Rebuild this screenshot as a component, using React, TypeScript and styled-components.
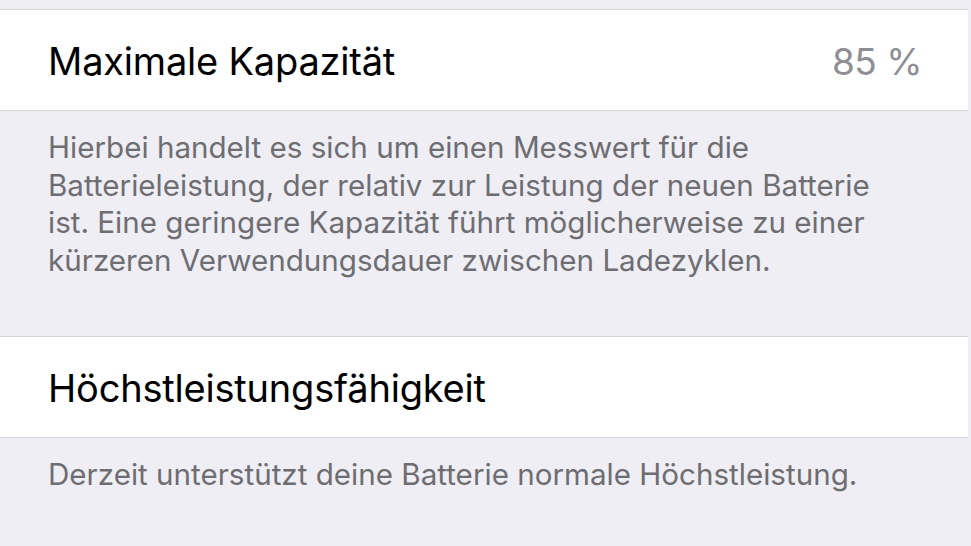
import React from "react";
import styled, { createGlobalStyle } from "styled-components";

const Global = createGlobalStyle`
  html, body { margin: 0; padding: 0; background: #efeef4; }
  body { font-family: Inter, "Noto Sans", sans-serif; -webkit-font-smoothing: antialiased; }
`;

const Page = styled.div`
  width: 971px;
  height: 546px;
  overflow: hidden;
  background: #efeef4;
  display: flex;
  flex-direction: column;
  padding-top: 9px;
  box-sizing: border-box;
`;

const Cell = styled.div`
  flex-shrink: 0;
  height: 100px;
  background: #fff;
  border-top: 1px solid #d6d5da;
  border-bottom: 1px solid #d6d5da;
  display: flex;
  align-items: center;
  justify-content: space-between;
  padding: 0 46px 0 48px;
  margin-right: 3px;
  box-sizing: content-box;
`;

const Label = styled.span`
  font-size: 38px;
  color: #000;
  letter-spacing: -0.2px;
  margin-top: 2px;
`;

const Value = styled.span`
  font-size: 37px;
  color: #8e8e93;
  letter-spacing: -0.5px;
  margin-top: 2px;
`;

const Footer = styled.div<{ $h: number }>`
  flex-shrink: 0;
  height: ${(p) => p.$h}px;
  padding: 18px 40px 0 48px;
  box-sizing: border-box;
  font-size: 29.6px;
  line-height: 37.7px;
  letter-spacing: 0px;
  color: #6d6d72;
  white-space: nowrap;
`;

export default function App() {
  return (
    <>
      <Global />
      <Page>
        <Cell>
          <Label>Maximale Kapazität</Label>
          <Value>85 %</Value>
        </Cell>
        <Footer $h={225}>
          Hierbei handelt es sich um einen Messwert für die
          <br />
          Batterieleistung, der relativ zur Leistung der neuen Batterie
          <br />
          ist. Eine geringere Kapazität führt möglicherweise zu einer
          <br />
          kürzeren Verwendungsdauer zwischen Ladezyklen.
        </Footer>
        <Cell>
          <Label>Höchstleistungsfähigkeit</Label>
        </Cell>
        <Footer $h={120}>
          Derzeit unterstützt deine Batterie normale Höchstleistung.
        </Footer>
      </Page>
    </>
  );
}
